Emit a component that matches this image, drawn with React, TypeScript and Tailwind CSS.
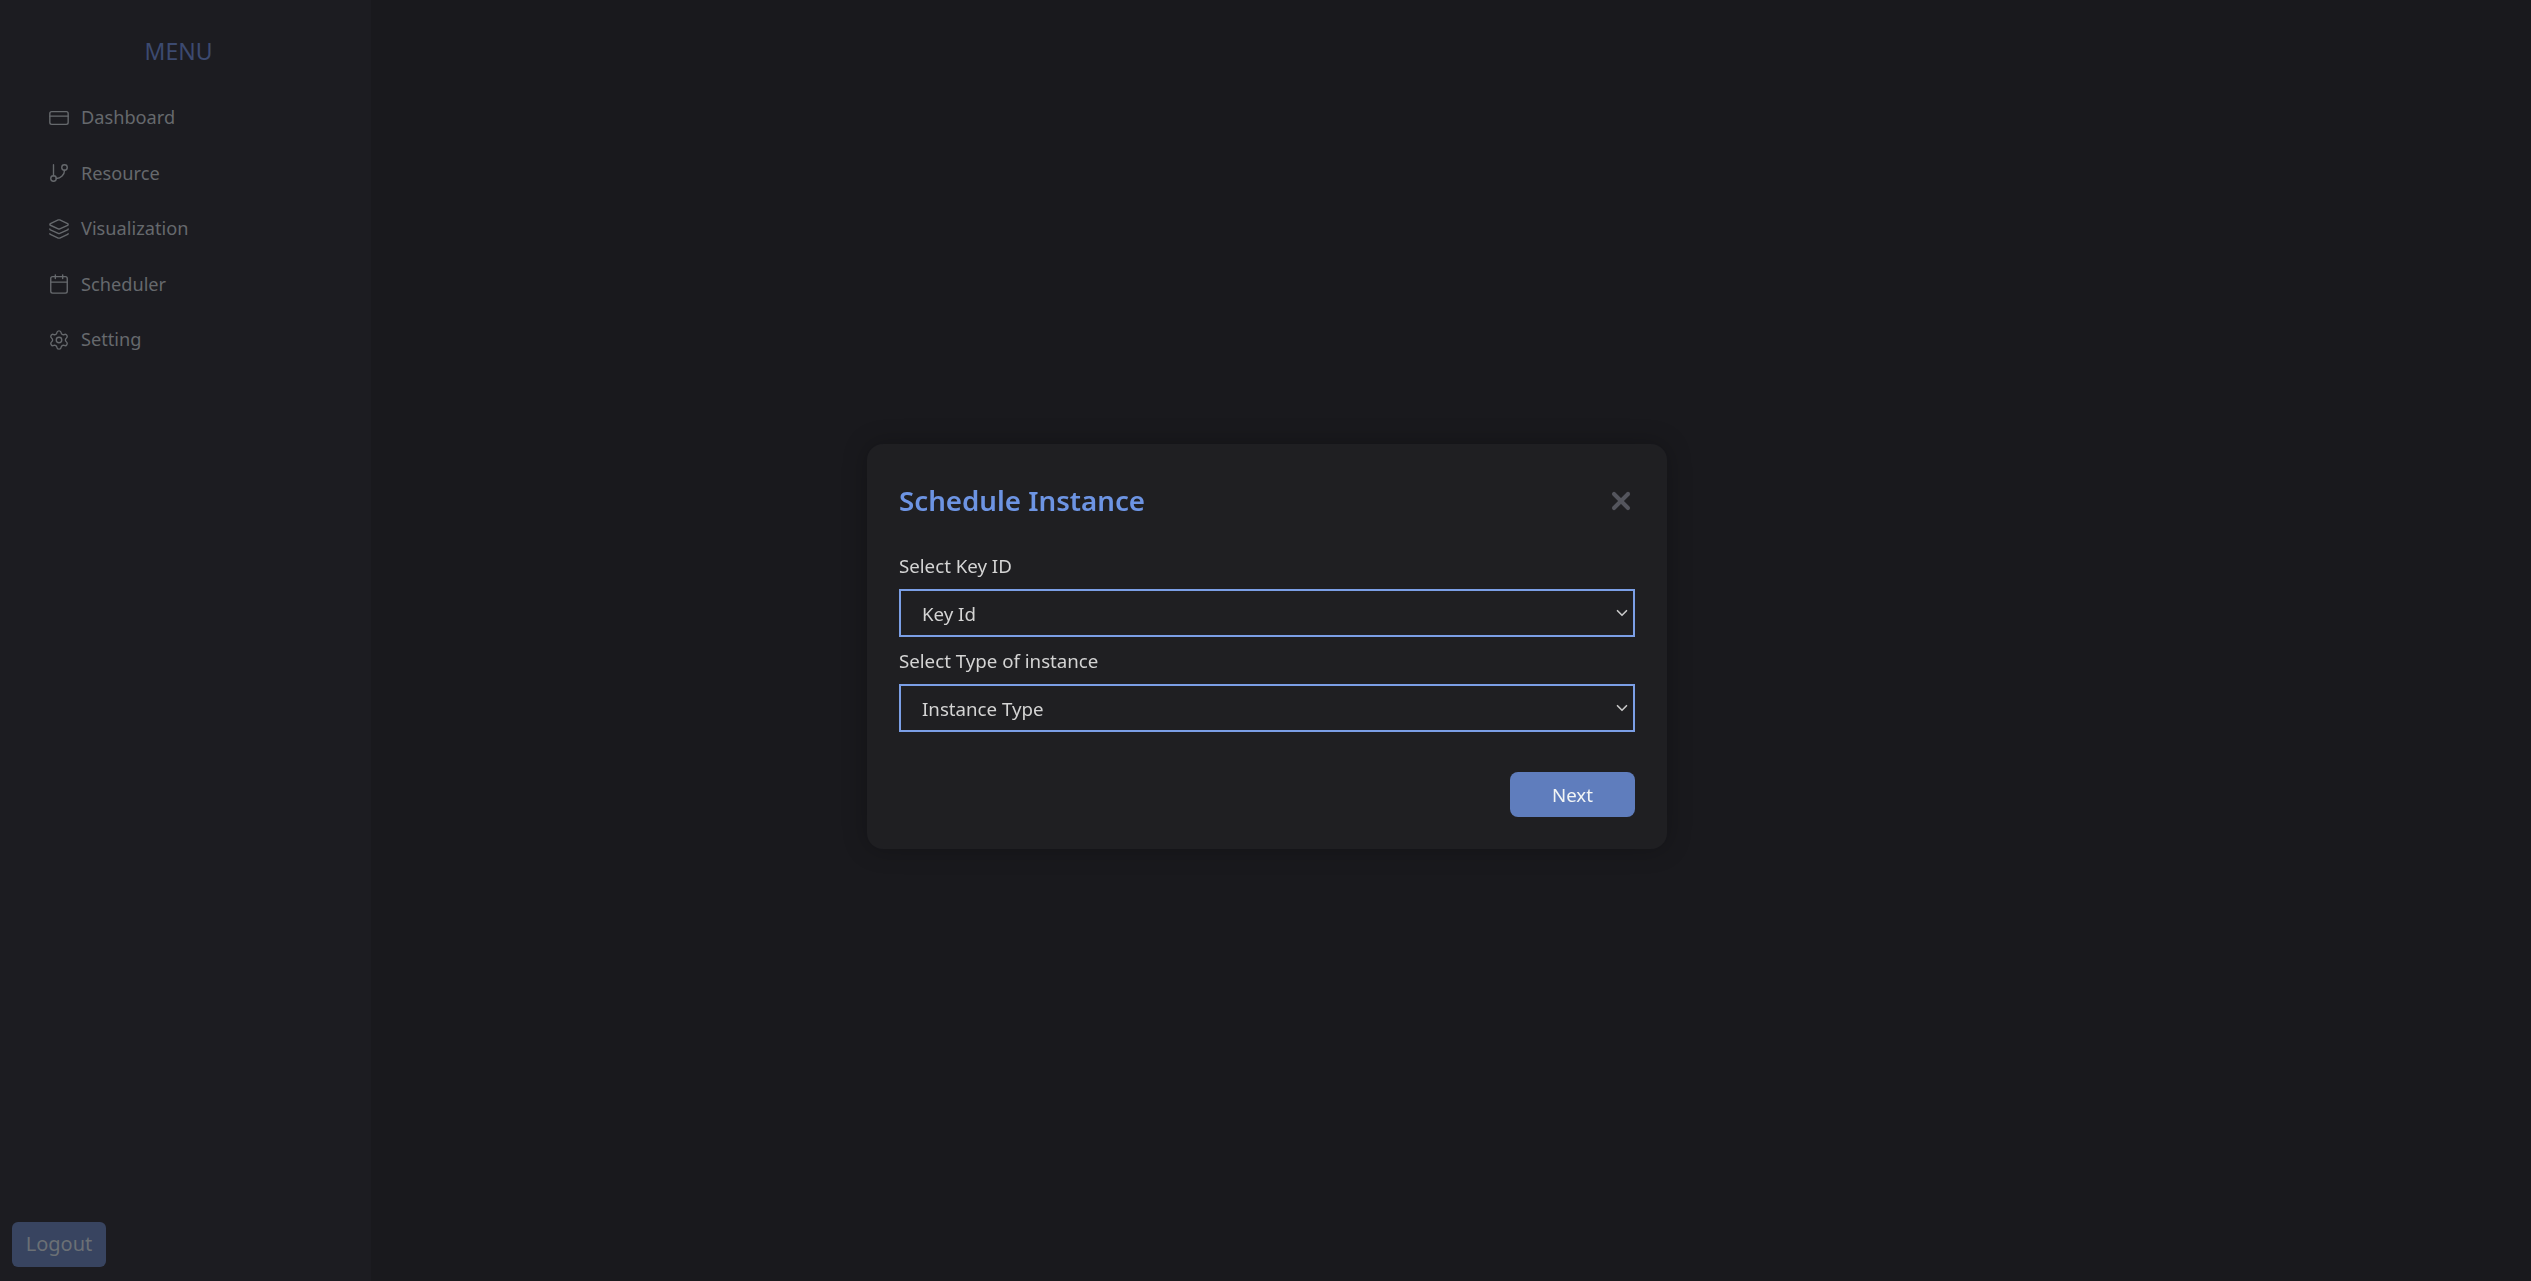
import { useState } from "react";
import { ChevronDown, CreditCard, GitBranch, Layers, Calendar, Settings, X } from "lucide-react";

const menuItems = [
  { label: "Dashboard", icon: CreditCard },
  { label: "Resource", icon: GitBranch },
  { label: "Visualization", icon: Layers },
  { label: "Scheduler", icon: Calendar },
  { label: "Setting", icon: Settings },
];

const Sidebar = () => {
  return (
    <aside className="flex h-full w-[371px] shrink-0 flex-col bg-[#1c1c21] font-['Noto_Sans',sans-serif]">
      <h2 className="w-[357px] pt-[34px] text-center text-[23px] leading-[34px] text-[#3c4a70]">MENU</h2>
      <ul className="mt-[21px] flex flex-col pl-[48px] pt-[1px]">
        {menuItems.map((item) => (
          <li key={item.label} className="flex h-[55.5px] items-center gap-[11px] text-[18.2px] text-[#66696d]">
            <item.icon className="h-[22px] w-[22px]" strokeWidth={1.5} />
            <span>{item.label}</span>
          </li>
        ))}
      </ul>
      <button className="mt-auto mb-[14px] ml-3 h-[45px] w-[94px] rounded-md bg-[#384460] pb-[2px] text-[20px] text-[#6b7075]">
        Logout
      </button>
    </aside>
  );
};

const Field = ({ label, placeholder }: { label: string; placeholder: string }) => {
  return (
    <div className="flex flex-col gap-[10px]">
      <label className="h-[27px] text-[18.7px] leading-[27px] text-[#d4d4d4]">{label}</label>
      <div className="relative">
        <select className="h-[48px] w-full appearance-none border-2 border-[#7b9fe6] bg-[#1f1f22] pl-[21px] pr-1 pt-[2px] text-[18.7px] text-[#d4d4d4] outline-none">
          <option>{placeholder}</option>
        </select>
        <ChevronDown className="absolute right-[4px] top-[15px] h-[18px] w-[18px] text-[#c8c8c8]" strokeWidth={2.2} />
      </div>
    </div>
  );
};

const App = () => {
  const [open, setOpen] = useState(true);

  return (
    <div className="flex h-[1281px] w-full overflow-hidden bg-[#19191d]">
      <Sidebar />
      <main className="flex-1" />
      {open && (
        <div className="fixed inset-0 flex items-center justify-center pl-[3px] pt-[12px]">
          <div className="h-[405px] w-[800px] rounded-2xl bg-[#1f1f22] p-8 font-['Noto_Sans',sans-serif] shadow-[0_0_24px_rgba(0,0,0,0.25)]">
            <div className="flex h-[50px] items-center justify-between">
              <h1 className="text-[27.7px] font-semibold text-[#6d94e3]">Schedule Instance</h1>
              <button onClick={() => setOpen(false)} className="text-[#54555d]">
                <X className="h-7 w-7" strokeWidth={3.5} />
              </button>
            </div>
            <div className="mt-[26px] flex flex-col gap-[10px]">
              <Field label="Select Key ID" placeholder="Key Id" />
              <Field label="Select Type of instance" placeholder="Instance Type" />
            </div>
            <div className="mt-[40px] flex justify-end">
              <button className="h-[45px] w-[125px] rounded-lg bg-[#5f7dbd] pt-[1px] text-[18.7px] text-[#f2f5f5]">Next</button>
            </div>
          </div>
        </div>
      )}
    </div>
  );
};

export default App;
